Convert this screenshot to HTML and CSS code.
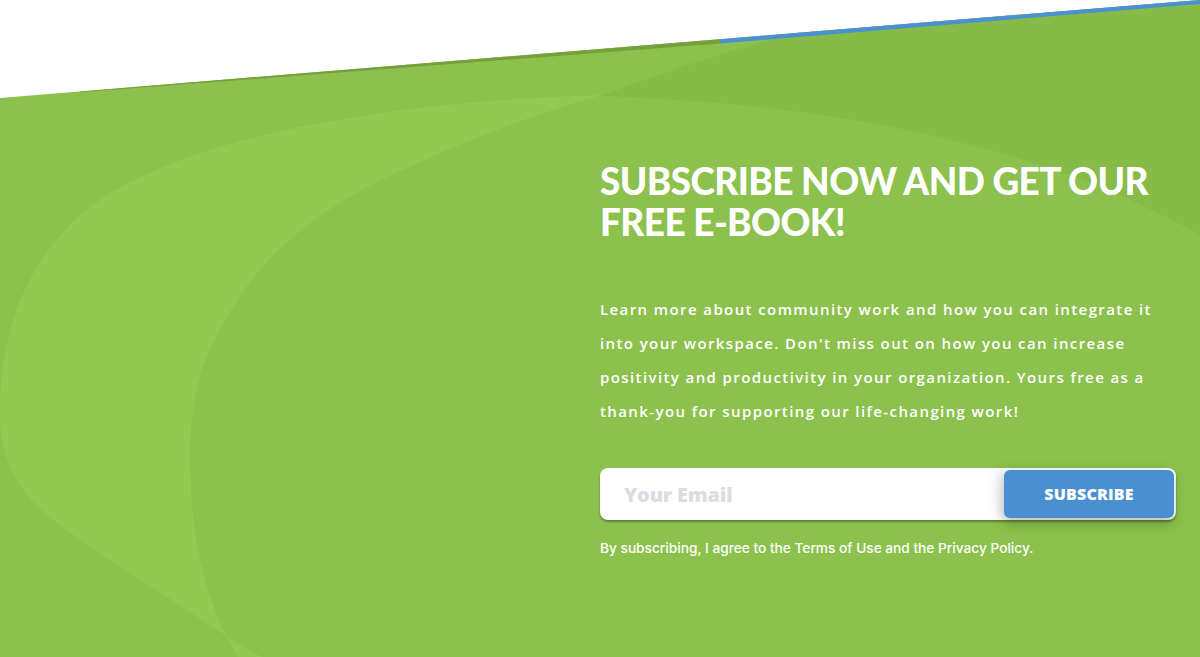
FILE: index.html
```html
<!DOCTYPE html>
<html lang="en">
<head>
<meta charset="utf-8">
<title>Subscribe</title>
<link rel="stylesheet" href="styles.css">
</head>
<body>
<section class="hero">
  <svg class="hero-bg" viewBox="0 0 1200 657" preserveAspectRatio="none" aria-hidden="true">
    <rect x="0" y="0" width="1200" height="657" fill="#ffffff"/>
    <polygon points="0,98 1200,0 1200,657 0,657" fill="#8bc14c"/>
    <path d="M600,96 Q700,58 795,33 L1200,0 L1200,235 C1050,150 850,104 600,96 Z" fill="#86bb48"/>
    <path d="M602,95 C420,100 180,130 80,215 C20,270 0,340 0,415 C0,470 30,505 60,525 C100,555 150,585 240,645 L262,657 L238,657 C210,610 195,560 191,488 C188,440 190,380 220,330 C260,250 330,200 420,162 C480,135 540,112 602,95 Z" fill="#93c953"/>
    <polygon points="80,91.47 720,39.2 720,43.6 80,92.2" fill="#76a03c"/>
    <polygon points="720,39.2 1200,0 1200,4 720,43.4" fill="#4a90d2"/>
  </svg>
  <div class="content">
    <h1 class="title">SUBSCRIBE NOW AND GET OUR FREE E-BOOK!</h1>
    <p class="lead">Learn more about community work and how you can integrate it into your workspace. Don't miss out on how you can increase positivity and productivity in your organization. Yours free as a thank-you for supporting our life-changing work!</p>
    <form class="signup">
      <input class="email" type="email" placeholder="Your Email">
      <button class="submit" type="button">SUBSCRIBE</button>
    </form>
    <p class="legal">By subscribing, I agree to the Terms of Use and the Privacy Policy.</p>
  </div>
</section>
</body>
</html>
```

FILE: styles.css
```css
* { box-sizing: border-box; }
html, body { margin: 0; padding: 0; }
body { background: #ffffff; }

.hero {
  position: relative;
  width: 1200px;
  height: 657px;
  overflow: hidden;
}

.hero-bg {
  position: absolute;
  left: 0;
  top: 0;
  width: 1200px;
  height: 657px;
  display: block;
}

.content {
  position: relative;
  margin-left: 600px;
  width: 578px;
  padding-top: 160px;
  display: flex;
  flex-direction: column;
  color: #ffffff;
}

.title {
  margin: 0;
  font-family: "Lato", "Liberation Sans", sans-serif;
  font-weight: 900;
  font-size: 37px;
  line-height: 41px;
  letter-spacing: -0.6px;
}

.lead {
  margin: 50px 0 0;
  font-family: "Open Sans", "Liberation Sans", sans-serif;
  font-weight: 600;
  font-size: 15px;
  line-height: 34px;
  letter-spacing: 1.4px;
  max-width: 570px;
}

.signup {
  margin: 40px 0 0;
  width: 576px;
  height: 52px;
  display: flex;
  align-items: center;
  background: #ffffff;
  border-radius: 8px;
  box-shadow: 0 2px 2px rgba(40, 60, 20, 0.45);
  padding: 2px 2px 2px 24px;
}

.email {
  flex: 1;
  min-width: 0;
  height: 100%;
  border: 0;
  outline: 0;
  background: transparent;
  font-family: "Open Sans", "Liberation Sans", sans-serif;
  font-weight: 800;
  font-size: 20px;
  letter-spacing: -0.2px;
  color: #555;
  padding: 0;
}
.email::placeholder { color: #dcdce2; }

.submit {
  width: 170px;
  height: 48px;
  border: 0;
  border-radius: 6px;
  background: #4a90d0;
  color: #ffffff;
  font-family: "Open Sans", "Liberation Sans", sans-serif;
  font-weight: 800;
  font-size: 16px;
  letter-spacing: 0.2px;
  box-shadow: -6px 0 12px rgba(60, 60, 90, 0.12), 0 6px 12px rgba(40, 60, 20, 0.25);
  cursor: pointer;
}

.legal {
  margin: 19px 0 0;
  font-family: "Inter", "Liberation Sans", sans-serif;
  font-weight: 500;
  font-size: 13.7px;
  line-height: 18px;
}
```
